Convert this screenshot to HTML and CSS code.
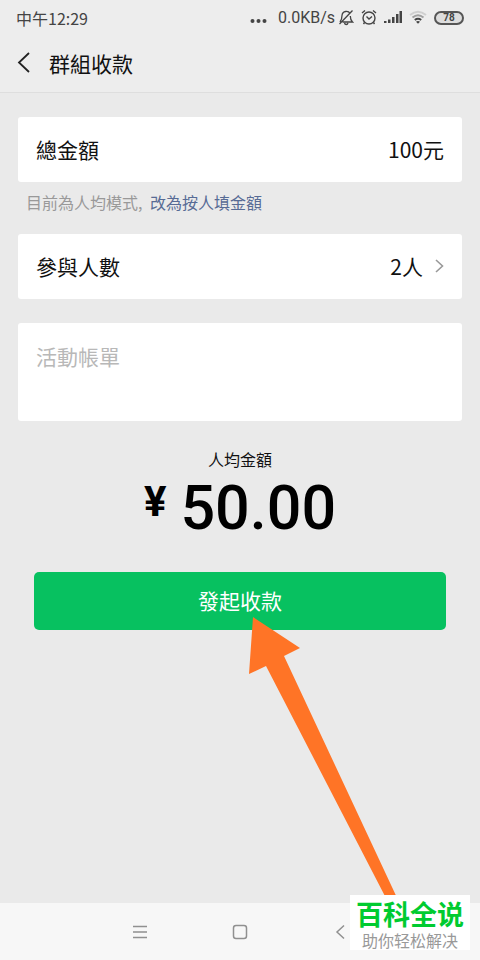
FILE: index.html
```html
<!DOCTYPE html>
<html lang="zh-Hant">
<head>
<meta charset="utf-8">
<meta name="viewport" content="width=device-width, initial-scale=1">
<title>群組收款</title>
<link rel="stylesheet" href="styles.css">
</head>
<body>
<div class="screen">
  <div class="status">
    <span class="clock">中午12:29</span>
    <div class="indicators">
      <svg width="17" height="18" viewBox="0 0 17 18" fill="#444"><circle cx="2.5" cy="12" r="2"/><circle cx="8.5" cy="12" r="2"/><circle cx="14.5" cy="12" r="2"/></svg>
      <span class="speed">0.0KB/s</span>
      <svg width="16" height="18" viewBox="0 0 16 18" fill="none" stroke="#444" stroke-width="1.3"><path d="M12 4.500C10.500 1.500 4.500 1.500 4 6.500C4 9 3.500 11 2 13M4.500 13H14.500C12.500 11 12.300 9.500 12.300 7M1.500 15L14.500 1.500M6.500 14C7 16 9.500 16 10 14"/></svg>
      <svg width="16" height="18" viewBox="0 0 16 18" fill="none" stroke="#444" stroke-width="1.4"><circle cx="8" cy="9" r="6"/><path d="M5.500 7.500L8 10L11 7.500M1 4L4 1.500M15 4L12 1.500M3.500 13.500L2.500 15M12.500 13.500L13.500 15"/></svg>
      <svg width="18" height="18" viewBox="0 0 18 18" fill="#444"><path d="M0 12h2.500v2H0zM4 10.500h2.500V14H4zM8 8h2.500v6H8zM12 5h2.500v9H12zM15.500 2H18v12h-2.500z"/></svg>
      <svg width="18" height="18" viewBox="0 0 18 18" fill="none" stroke-width="2"><path stroke="#cfcfcf" d="M1 6Q9 -0.500 17 6"/><path stroke="#a0a0a0" d="M3.500 8.500Q9 4 14.500 8.500"/><path stroke="#444" d="M5.800 11Q9 8.500 12.200 11"/><path fill="#444" d="M7 12.700Q9 11.500 11 12.700L9 14.700z"/></svg>
      <span class="battery">78</span>
    </div>
  </div>
  <header class="header">
    <button class="back" type="button" aria-label="返回">
      <svg width="14" height="22" viewBox="0 0 14 22" fill="none" stroke="#222" stroke-width="1.800"><path d="M12 1L2 10.500L12 20"/></svg>
    </button>
    <h1 class="title">群組收款</h1>
  </header>
  <main class="main">
    <form class="form">
      <div class="card">
        <label for="total">總金額</label>
        <input class="total" id="total" type="text" value="100元">
      </div>
      <p class="hint">目前為人均模式, <a href="#mode">改為按人填金額</a></p>
      <button class="card people" type="button">
        <span>參與人數</span>
        <span class="count">2人
          <svg width="9" height="14" viewBox="0 0 9 14" fill="none" stroke="#999" stroke-width="1.600"><path d="M1 1L7.500 7L1 13"/></svg>
        </span>
      </button>
      <textarea class="note" aria-label="活動帳單" placeholder="活動帳單"></textarea>
      <div class="average">
        <p class="average-label">人均金額</p>
        <p class="amount"><span class="yen">¥</span>50.00</p>
      </div>
      <div class="action">
        <button class="submit" type="button">發起收款</button>
        <svg class="arrow" width="152" height="288" viewBox="0 0 152 288" fill="#ff7426" aria-hidden="true"><path d="M5 0L52 31L36 39L151 285H140L18 49L1 57z"/></svg>
      </div>
    </form>
  </main>
  <nav class="nav">
    <button type="button" aria-label="選單"><svg width="14" height="14" viewBox="0 0 14 14" stroke="#909090" stroke-width="1.400"><path d="M0 1.500H14M0 7H14M0 12.500H14"/></svg></button>
    <button type="button" aria-label="主畫面"><svg width="16" height="16" viewBox="0 0 16 16" fill="none" stroke="#909090" stroke-width="1.500"><rect x="1.500" y="1.500" width="13" height="13" rx="2.500"/></svg></button>
    <button type="button" aria-label="返回"><svg width="16" height="16" viewBox="0 0 16 16" fill="none" stroke="#909090" stroke-width="1.500"><path d="M12 1.500L5 8L12 14.500"/></svg></button>
    <div class="brand" lang="zh-Hans">
      <strong>百科全说</strong>
      <span>助你轻松解决</span>
    </div>
  </nav>
</div>
</body>
</html>
```

FILE: styles.css
```css
* {
  box-sizing: border-box;
}

body {
  margin: 0;
  background: #eaeaea;
  color: #111;
  font-family: "Noto Sans CJK TC", "Noto Sans", sans-serif;
  font-size: 21px;
  line-height: 30px;
}

h1,
p {
  margin: 0;
  font-weight: 400;
}

button,
input,
textarea {
  margin: 0;
  padding: 0;
  border: 0;
  background: none;
  color: inherit;
  font: inherit;
}

svg {
  display: block;
  flex: none;
}

.screen {
  display: flex;
  flex-direction: column;
  min-height: 100vh;
}

.status {
  display: flex;
  align-items: center;
  justify-content: space-between;
  height: 35px;
  padding: 0 16px;
  background: #ededed;
  color: #444;
  font-size: 16px;
}

.indicators {
  display: flex;
  align-items: center;
  gap: 7px;
}

.speed {
  margin: 0 -4px 0 4px;
  font-family: Roboto, sans-serif;
}

.battery {
  width: 30px;
  height: 14px;
  border: 2px solid #555;
  border-radius: 7px;
  background: #ddd;
  font: 700 10px/10px Roboto, sans-serif;
  text-align: center;
}

.header {
  display: flex;
  align-items: center;
  gap: 18px;
  height: 58px;
  padding: 0 17px 2px;
  border-bottom: 1px solid #dedede;
  background: #ededed;
}

.title {
  font-size: 21px;
}

.main {
  flex: 1;
  padding: 24px 18px;
}

.card {
  display: flex;
  align-items: center;
  justify-content: space-between;
  width: 100%;
  height: 65px;
  padding: 0 18px 2px;
  border-radius: 3px;
  background: #fff;
}

.total {
  flex: 1;
  min-width: 0;
  text-align: right;
}

.hint {
  padding: 5px 8px 17px;
  color: #999;
  font-size: 16px;
}

.hint a {
  margin-left: 4px;
  color: #576b95;
  text-decoration: none;
}

.count {
  display: flex;
  align-items: center;
  gap: 12px;
}

.note {
  display: block;
  width: 100%;
  height: 98px;
  margin-top: 24px;
  padding: 18px;
  border-radius: 3px;
  background: #fff;
  resize: none;
}

.note::placeholder {
  color: #b8b8b8;
}

.average {
  margin-top: 23px;
  text-align: center;
}

.average-label {
  font-size: 16px;
}

.amount {
  display: flex;
  justify-content: center;
  gap: 14px;
  color: #000;
  font: 500 61px/68px Roboto, sans-serif;
}

.yen {
  font-size: 42px;
  font-weight: 700;
  line-height: 56px;
}

.action {
  position: relative;
  margin: 30px 16px 0;
}

.submit {
  display: block;
  width: 100%;
  height: 58px;
  padding-bottom: 2px;
  border-radius: 5px;
  background: #07c160;
  color: #fff;
}

.arrow {
  position: absolute;
  top: 45px;
  left: 214px;
  pointer-events: none;
}

.nav {
  position: relative;
  display: flex;
  align-items: center;
  justify-content: center;
  gap: 70px;
  height: 57px;
  background: #f7f7f7;
}

.nav button {
  display: flex;
  justify-content: center;
  width: 30px;
}

.brand {
  position: absolute;
  right: 10px;
  bottom: 10px;
  display: flex;
  flex-direction: column;
  align-items: center;
  width: 120px;
  height: 55px;
  padding-top: 1px;
  background: #fff;
  color: #999;
  font-family: "Noto Sans CJK SC", sans-serif;
  font-size: 16px;
  line-height: 16px;
}

.brand strong {
  color: #00cb30;
  font-size: 27px;
  line-height: 36px;
}
```
